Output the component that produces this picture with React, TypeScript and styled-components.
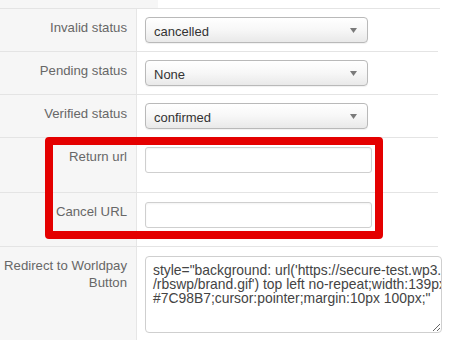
import React from "react";
import styled, { createGlobalStyle } from "styled-components";

const GlobalStyle = createGlobalStyle`
  html, body { margin: 0; padding: 0; background: #ffffff; }
  body { font-family: "Liberation Sans", Arial, Helvetica, sans-serif; width: 450px; height: 340px; overflow: hidden; }
  * { box-sizing: border-box; }
`;

const Page = styled.div`
  position: relative;
  width: 450px;
  height: 340px;
  overflow: hidden;
`;

const TopStrip = styled.div`
  height: 9px;
  width: 440px;
  display: flex;
  border-bottom: 1px solid #e4e4e4;
`;

const TopTab = styled.div`
  width: 158px;
  background: #f6f6f6;
`;

const Form = styled.div`
  width: 438px;
  display: flex;
  flex-direction: column;
`;

const Row = styled.div`
  display: grid;
  grid-template-columns: 137px 1fr;
  border-bottom: 1px solid #e4e4e4;
`;

const Label = styled.div`
  background: #f6f6f6;
  border-right: 1px solid #e6e6e6;
  color: #676767;
  font-size: 13.2px;
  line-height: 17px;
  text-align: right;
  padding: 10px 9px 0 0;
`;

const Field = styled.div<{ $pb: number; $pt: number }>`
  padding: ${(p) => p.$pt}px 0 ${(p) => p.$pb}px 8px;
`;

const SelectBox = styled.div`
  width: 223px;
  height: 26px;
  border: 1px solid #b9b9b9;
  border-radius: 4px;
  background: linear-gradient(#ffffff 0%, #f7f7f7 50%, #e9e9e9 100%);
  box-shadow: 0 1px 1px rgba(0, 0, 0, 0.06);
  display: flex;
  align-items: center;
  justify-content: space-between;
  padding: 2px 10px 0 8px;
  font-size: 13px;
  color: #333333;
`;

const Caret = styled.svg`
  width: 7px;
  height: 5px;
  display: block;
  margin-top: -2px;
`;

const TextInput = styled.input`
  display: block;
  width: 227px;
  height: 26px;
  border: 1px solid #cfcfcf;
  border-radius: 3px;
  background: #ffffff;
  box-shadow: inset 0 1px 2px rgba(0, 0, 0, 0.05);
  outline: none;
  margin: 0;
`;

const TextArea = styled.textarea`
  display: block;
  width: 297px;
  height: 77px;
  margin: 0;
  border: 1px solid #cfcfcf;
  border-radius: 4px;
  background: #ffffff;
  padding: 6px 2px 6px 7px;
  font-family: "Liberation Sans", Arial, Helvetica, sans-serif;
  font-size: 13.9px;
  line-height: 14px;
  color: #444444;
  white-space: pre;
  overflow: hidden;
  resize: both;
  outline: none;
`;

const Highlight = styled.div`
  position: absolute;
  left: 45px;
  top: 137px;
  width: 338px;
  height: 102px;
  border: 8px solid #e40000;
  border-radius: 4px;
  pointer-events: none;
`;

const Select = ({ value }: { value: string }) => (
  <SelectBox>
    <span>{value}</span>
    <Caret viewBox="0 0 7 5">
      <path d="M0 0 L7 0 L3.5 5 Z" fill="#7a7a7a" />
    </Caret>
  </SelectBox>
);

const textValue =
  "style=\"background: url('https://secure-test.wp3.\n/rbswp/brand.gif') top left no-repeat;width:139px;height:\n#7C98B7;cursor:pointer;margin:10px 100px;\"";

export default function App() {
  return (
    <Page>
      <GlobalStyle />
      <TopStrip>
        <TopTab />
      </TopStrip>
      <Form>
        <Row>
          <Label>Invalid status</Label>
          <Field $pt={8} $pb={8}>
            <Select value="cancelled" />
          </Field>
        </Row>
        <Row>
          <Label>Pending status</Label>
          <Field $pt={8} $pb={8}>
            <Select value="None" />
          </Field>
        </Row>
        <Row>
          <Label>Verified status</Label>
          <Field $pt={8} $pb={8}>
            <Select value="confirmed" />
          </Field>
        </Row>
        <Row>
          <Label>Return url</Label>
          <Field $pt={9} $pb={19}>
            <TextInput type="text" readOnly />
          </Field>
        </Row>
        <Row>
          <Label>Cancel URL</Label>
          <Field $pt={9} $pb={18}>
            <TextInput type="text" readOnly />
          </Field>
        </Row>
        <Row>
          <Label>
            Redirect to Worldpay
            <br />
            Button
          </Label>
          <Field $pt={9} $pb={20}>
            <TextArea readOnly wrap="off" value={textValue} />
          </Field>
        </Row>
      </Form>
      <Highlight />
    </Page>
  );
}
